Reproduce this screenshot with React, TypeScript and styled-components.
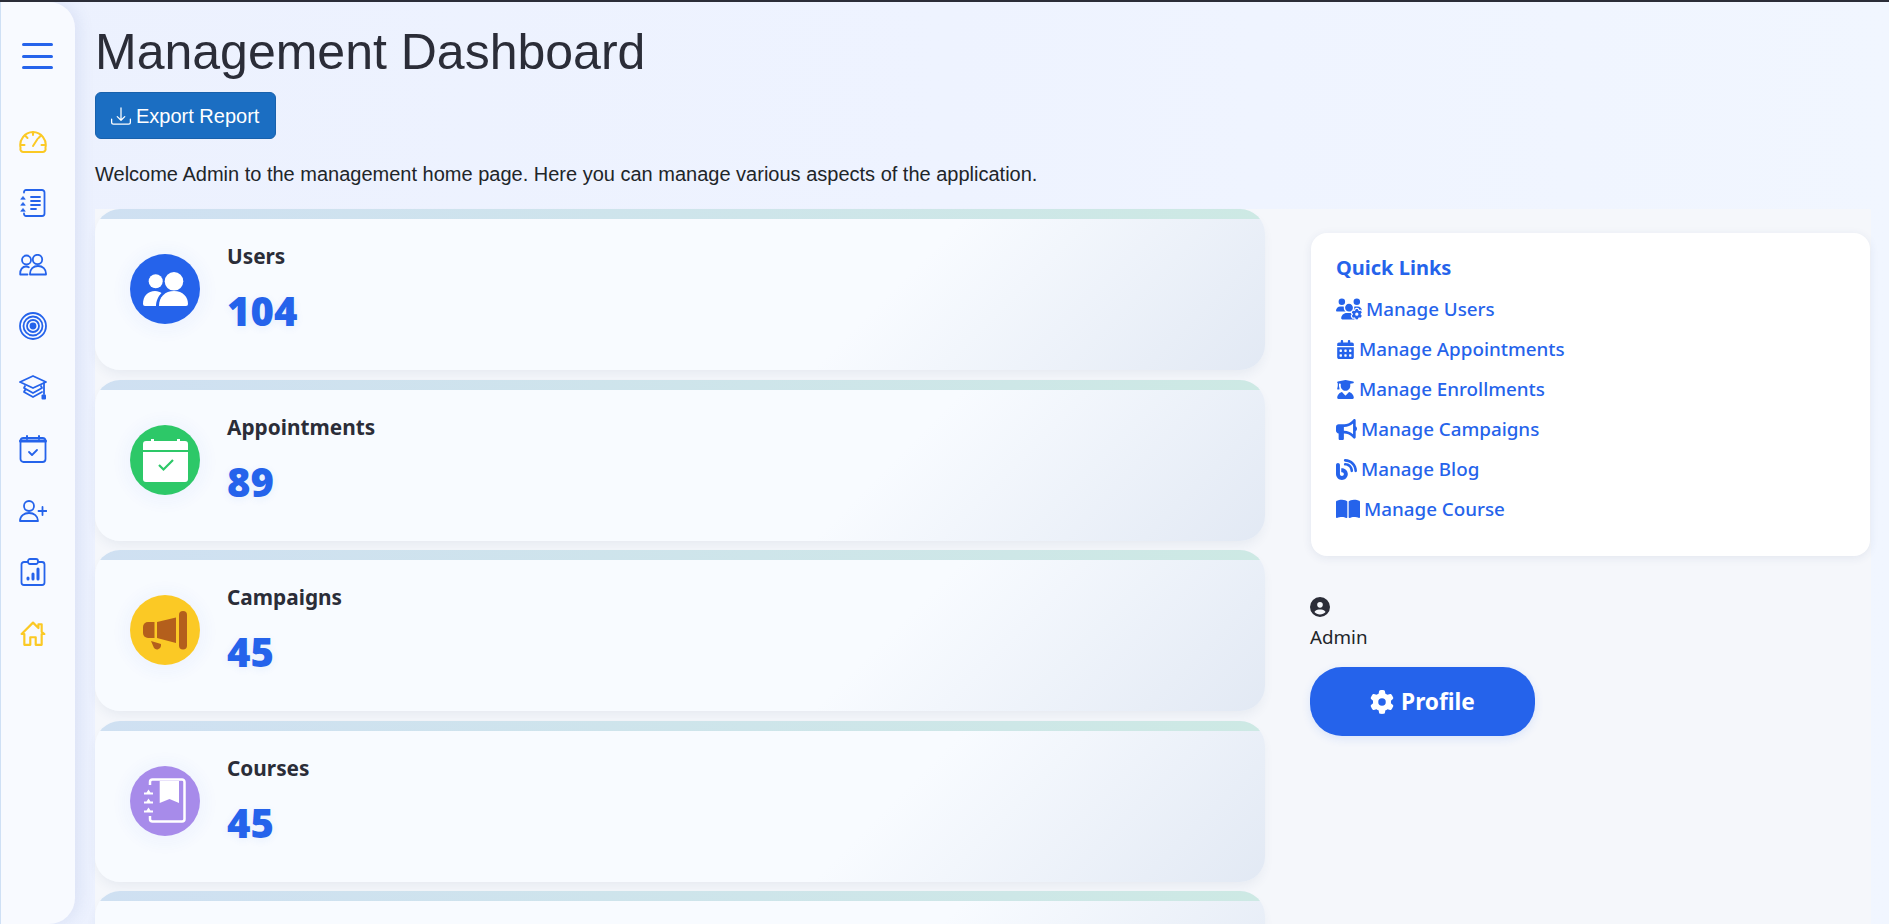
import React from 'react';
import styled, { createGlobalStyle } from 'styled-components';
import { BsDownload } from 'react-icons/bs';
import {
  FaUsersGear, FaCalendarDays, FaUserGraduate, FaBullhorn, FaBlog, FaBookOpen, FaCircleUser, FaGear,
} from 'react-icons/fa6';

const C = {
  blue: '#2563eb', dark: '#2b2d38', amber: '#fbc925', green: '#2dc868', violet: '#a78bea',
  brown: '#b45f1c', btn: '#1b6ec2',
};
const SEGOE = "'Noto Sans','Open Sans',sans-serif";

const Global = createGlobalStyle`
  html, body { margin:0; padding:0; height:100%; overflow:hidden; }
  body { background:#eef3fe; font-family:'Liberation Sans',Arial,sans-serif; }
`;

const Page = styled.div`
  display:flex; height:922px; border-top:2px solid ${C.dark}; overflow:hidden;
  background:linear-gradient(90deg,#ecf1fe 0%,#eef3ff 50%,#f1f6ff 100%);
`;
const Sidebar = styled.nav`
  width:75px; flex-shrink:0; display:flex; flex-direction:column; box-sizing:border-box;
  background:#f8faff; border-left:1px solid #cfe0f5; border-radius:0 26px 26px 0;
  box-shadow:4px 0 16px rgba(70,100,170,.1); position:relative; z-index:2;
`;
const Burger = styled.button`
  width:31px; height:26px; margin:41px 0 42px 21px; padding:0; border:0; background:none;
  display:flex; flex-direction:column; justify-content:space-between;
  span { display:block; height:3px; border-radius:2px; background:${C.blue}; }
`;
const NavItem = styled.a<{ $amber?: boolean }>`
  height:61.5px; display:flex; align-items:center; justify-content:center; padding-right:10px;
  color:${p => (p.$amber ? C.amber : C.blue)};
`;
const Main = styled.main`
  flex:1; min-width:0; display:flex; flex-direction:column;
`;
const Header = styled.header`
  padding:0 0 0 20px; height:207px; box-sizing:border-box;
`;
const Title = styled.h1`
  margin:0; padding-top:23px; font-size:50px; line-height:55px; font-weight:400; color:${C.dark};
`;
const Export = styled.button`
  display:flex; align-items:center; gap:5px; margin-top:12px; height:47px; width:181px; padding:1px 15px 0;
  box-sizing:border-box; border:1px solid #1861ac; border-radius:6px; background:${C.btn}; color:#fff;
  font:20px 'Liberation Sans',Arial,sans-serif;
`;
const Welcome = styled.p`
  margin:23px 0 0; font-size:20px; line-height:24px; color:#212529;
`;
const Body = styled.div`
  flex:1; margin:0 18px 0 20px; display:flex; background:#f5f7fb; min-height:0;
`;
const CardList = styled.div`
  width:1170px; flex-shrink:0; display:flex; flex-direction:column; gap:9.6px;
`;
const Card = styled.section`
  flex-shrink:0; height:161px; box-sizing:border-box; display:flex; align-items:center; padding:10px 0 0 35px;
  position:relative; overflow:hidden; border-radius:25px;
  background:linear-gradient(135deg,#f8fbff 66%,#e2e9f4 100%);
  box-shadow:0 6px 12px -2px rgba(40,70,120,.07);
  &::before {
    content:''; position:absolute; left:0; right:0; top:0; height:10px;
    background:linear-gradient(90deg,#cfe0f2 0%,#cde9e4 100%);
  }
`;
const Circle = styled.div<{ $bg: string }>`
  width:70px; height:70px; flex-shrink:0; border-radius:50%; margin-top:-11px;
  display:flex; align-items:center; justify-content:center; background:${p => p.$bg};
  box-shadow:0 2px 16px 6px rgba(37,99,235,.045);
`;
const CardText = styled.div`
  margin:-13px 0 0 27px; display:flex; flex-direction:column;
`;
const CardLabel = styled.div`
  font:700 20.8px/28px ${SEGOE}; color:${C.dark};
`;
const CardValue = styled.div`
  margin-top:18px; font:900 40px/46px ${SEGOE}; color:${C.blue}; text-shadow:0 2px 8px rgba(37,99,235,.08);
`;
const Side = styled.aside`
  flex:1; min-width:0; padding:24px 1px 0 45px; display:flex; flex-direction:column; align-items:flex-start;
`;
const Links = styled.div`
  align-self:stretch; margin-left:1px; height:323px; box-sizing:border-box; padding:21px 25px; background:#fff; border-radius:16px;
  box-shadow:0 2px 10px rgba(40,70,120,.09);
`;
const LinksTitle = styled.h3`
  margin:0 0 8px; font:700 20px/27px ${SEGOE}; color:${C.blue};
`;
const LinkRow = styled.a`
  display:flex; align-items:center; gap:4px; height:40px; font:500 18.8px/24px ${SEGOE}; color:${C.blue};
`;
const AdminIcon = styled.div`
  margin-top:41px; height:20px; font-size:20px; line-height:20px; color:${C.dark};
`;
const AdminName = styled.div`
  margin-top:8px; font:400 18.8px/24px ${SEGOE}; color:#212529;
`;
const Profile = styled.button`
  margin-top:18px; width:225px; height:69px; display:flex; align-items:center; justify-content:center; gap:7px;
  border:0; border-radius:32px; background:${C.blue}; color:#fff; font:700 22.7px/30px ${SEGOE};
  box-shadow:0 3px 10px rgba(37,99,235,.12);
`;

const S = { fill: 'none', stroke: 'currentColor', strokeWidth: 1.8, strokeLinecap: 'round', strokeLinejoin: 'round' } as const;

const GaugeIcon = () => (
  <svg width="28" height="24" viewBox="0 0 28 24" {...S} strokeWidth={2}>
    <path d="M5 22h18a3 3 0 0 0 3.400-4A13 13 0 0 0 14 2 13 13 0 0 0 1.600 18 3 3 0 0 0 5 22z" />
    <path d="M14 2v3M6.500 6l2 2M21.500 6l-2 2M2.500 15h3M22.500 15h3M18.500 9l-4.500 7" />
  </svg>
);
const NotebookIcon = () => (
  <svg width="26" height="28" viewBox="0 0 26 28" {...S}>
    <path d="M4 3.500V3a2 2 0 0 1 2-2h16a2.500 2.500 0 0 1 2.500 2.500v21A2.500 2.500 0 0 1 22 27H6a2 2 0 0 1-2-2v-.5" />
    <path d="M11 8h9M11 12h9M11 16h9M11 20h5" />
    <path d="M1 10l2-2.500L5 10zM1 16l2-2.500L5 16zM1 22l2-2.500L5 22z" fill="currentColor" strokeWidth={.8} />
  </svg>
);
const PeopleIcon = () => (
  <svg width="28" height="22" viewBox="0 0 28 22" {...S}>
    <circle cx="7.500" cy="6" r="4.500" /><circle cx="18.500" cy="5.500" r="4.700" />
    <path d="M8.500 20.500H1.200c-.3-5 2.300-8 5.800-8 1 0 2 .2 2.800.7M11 20.500h16c.3-5.500-3.500-8.500-8-8.500s-8.300 3-8 8.500z" />
  </svg>
);
const TargetIcon = () => (
  <svg width="28" height="28" viewBox="0 0 28 28" {...S}>
    <circle cx="14" cy="14" r="13" /><circle cx="14" cy="14" r="9.500" /><circle cx="14" cy="14" r="6" />
    <circle cx="14" cy="14" r="2.500" fill="currentColor" />
  </svg>
);
const GradIcon = () => (
  <svg width="28" height="25" viewBox="0 0 28 25" {...S}>
    <path d="M14 1L1 7l13 6 13-6z" />
    <path d="M6 11l-1 2 9 5 9-5-1-2M6 15l-1 2 9 5 9-5" />
    <path d="M25 8v11" /><rect x="22.500" y="19.500" width="4.500" height="5" rx="1" fill="currentColor" stroke="none" />
  </svg>
);
const CalendarIcon = () => (
  <svg width="28" height="28" viewBox="0 0 28 28" {...S}>
    <rect x="1.500" y="3" width="25" height="24" rx="3" />
    <path d="M1.500 6h25" strokeWidth={3} /><path d="M8 1v3M20 1v3" strokeWidth={2} />
    <path d="M10 17l3 3 5-5" />
  </svg>
);
const UserPlusIcon = () => (
  <svg width="28" height="22" viewBox="0 0 28 22" {...S}>
    <circle cx="10" cy="6" r="5" />
    <path d="M1 21c0-5 4-8 9-8s9 3 9 8z" /><path d="M23.500 7v8M19.500 11h8" />
  </svg>
);
const ClipboardIcon = () => (
  <svg width="26" height="28" viewBox="0 0 26 28" {...S}>
    <path d="M7.500 4H4a2.500 2.500 0 0 0-2.500 2.500v18A2.500 2.500 0 0 0 4 27h18a2.500 2.500 0 0 0 2.500-2.500v-18A2.500 2.500 0 0 0 22 4h-3.500" />
    <rect x="8" y="1" width="10" height="5" rx="2" />
    <path d="M8 21v-1M13 21v-5M18 21V11" strokeWidth={3} />
  </svg>
);
const HomeIcon = () => (
  <svg width="26" height="26" viewBox="0 0 24 24" {...S} strokeWidth={2}>
    <path d="M1.500 12L12 1.500l5 5V3h3v7l2.500 2H20v10h-5.500v-7h-5v7H4V12z" />
  </svg>
);

const UsersGlyph = () => (
  <svg width="45" height="34" viewBox="0 0 45 34" fill="#fff">
    <circle cx="12.700" cy="9.300" r="7" /><circle cx="31" cy="9.300" r="9.300" />
    <path d="M0 32c0-8 5-13 12-13 3 0 5 1 6.500 2-3 3-5.500 8-5.500 13H2a2 2 0 0 1-2-2z" />
    <path d="M16 34c0-9 6-15 15-15s14 6 14 13a2 2 0 0 1-2 2z" />
  </svg>
);
const CalGlyph = () => (
  <svg width="45" height="44" viewBox="0 0 45 44">
    <path d="M0 6a3 3 0 0 1 3-3h5V1h3v2h23V1h3v2h5a3 3 0 0 1 3 3v6H0z" fill="#fff" />
    <path d="M0 14h45v27a3 3 0 0 1-3 3H3a3 3 0 0 1-3-3z" fill="#fff" />
    <path d="M16 27l4.500 4.500L30 22" fill="none" stroke={C.green} strokeWidth="2.200" />
  </svg>
);
const MegaGlyph = () => (
  <svg width="44" height="39" viewBox="0 0 44 39" fill={C.brown}>
    <path d="M0 16a5 5 0 0 1 5-5h6.500v16H5a5 5 0 0 1-5-5z" />
    <path d="M14 11l19-4.500V32l-19-5z" />
    <rect x="36" y="0" width="8" height="38.500" rx="4" />
    <path d="M8 30l10 3v2a4 4 0 0 1-7 2z" />
  </svg>
);
const BookGlyph = () => (
  <svg width="42" height="45" viewBox="0 0 42 45">
    <path d="M6 7V4a2.500 2.500 0 0 1 2.500-2.500H38A2.500 2.500 0 0 1 40.500 4v37a2.500 2.500 0 0 1-2.500 2.500H8.500A2.500 2.500 0 0 1 6 41v-3" fill="none" stroke="#fff" strokeWidth="2.500" />
    <path d="M15.700 3H35v22l-9.500-4-9.800 4z" fill="#fff" />
    <path d="M0 16.500h9V14.500H6.500L4.500 11.500 2.500 14.500H0zM0 25.500h9V23.500H6.500l-2-3-2 3H0zM0 34.500h9V32.500H6.500l-2-3-2 3H0z" fill="#fff" />
  </svg>
);

const nav: { icon: React.ReactNode; amber?: boolean }[] = [
  { icon: <GaugeIcon />, amber: true }, { icon: <NotebookIcon /> }, { icon: <PeopleIcon /> },
  { icon: <TargetIcon /> }, { icon: <GradIcon /> }, { icon: <CalendarIcon /> },
  { icon: <UserPlusIcon /> }, { icon: <ClipboardIcon /> }, { icon: <HomeIcon />, amber: true },
];

const cards = [
  { label: 'Users', value: '104', bg: C.blue, icon: <UsersGlyph /> },
  { label: 'Appointments', value: '89', bg: C.green, icon: <CalGlyph /> },
  { label: 'Campaigns', value: '45', bg: C.amber, icon: <MegaGlyph /> },
  { label: 'Courses', value: '45', bg: C.violet, icon: <BookGlyph /> },
];

const links = [
  { label: 'Manage Users', icon: <FaUsersGear size={26} /> },
  { label: 'Manage Appointments', icon: <FaCalendarDays size={19} /> },
  { label: 'Manage Enrollments', icon: <FaUserGraduate size={19} /> },
  { label: 'Manage Campaigns', icon: <FaBullhorn size={21} /> },
  { label: 'Manage Blog', icon: <FaBlog size={21} /> },
  { label: 'Manage Course', icon: <FaBookOpen size={24} /> },
];

export default function App() {
  return (
    <Page>
      <Global />
      <Sidebar>
        <Burger aria-label="Menu"><span /><span /><span /></Burger>
        {nav.map((n, i) => <NavItem key={i} $amber={n.amber}>{n.icon}</NavItem>)}
      </Sidebar>
      <Main>
        <Header>
          <Title>Management Dashboard</Title>
          <Export><BsDownload size={20} />Export Report</Export>
          <Welcome>Welcome Admin to the management home page. Here you can manage various aspects of the application.</Welcome>
        </Header>
        <Body>
          <CardList>
            {cards.map(c => (
              <Card key={c.label}>
                <Circle $bg={c.bg}>{c.icon}</Circle>
                <CardText>
                  <CardLabel>{c.label}</CardLabel>
                  <CardValue>{c.value}</CardValue>
                </CardText>
              </Card>
            ))}
            {/* next card is cut by the window, only its top shows */}
            <Card />
          </CardList>
          <Side>
            <Links>
              <LinksTitle>Quick Links</LinksTitle>
              {links.map(l => <LinkRow key={l.label}>{l.icon}{l.label}</LinkRow>)}
            </Links>
            <AdminIcon><FaCircleUser /></AdminIcon>
            <AdminName>Admin</AdminName>
            <Profile><FaGear size={24} />Profile</Profile>
          </Side>
        </Body>
      </Main>
    </Page>
  );
}
